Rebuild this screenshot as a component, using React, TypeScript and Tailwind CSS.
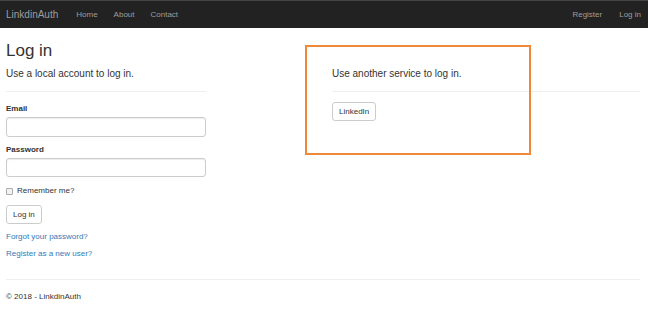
import React from 'react';

const NavLink: React.FC<{ label: string }> = ({ label }) => (
  <a className="text-[8px] text-[#9d9d9d] leading-none">{label}</a>
);

const inputClass =
  'block w-[200px] border border-[#ccc] rounded-[3px] shadow-[inset_0_1px_1px_rgba(0,0,0,0.075)] bg-white';

const buttonClass =
  'block h-[19px] px-[6px] text-[8px] text-[#333] border border-[#ccc] rounded-[3px] bg-white leading-none';

const App: React.FC = () => {
  return (
    <div className="relative w-[648px] h-[312px] bg-white text-[#333] font-['Liberation_Sans',Arial,sans-serif] overflow-hidden">
      <nav className="h-[28px] bg-[#222] border-t border-[#444] flex items-center pl-[6px] pr-[7px]">
        <span className="text-[10px] text-[#9d9d9d] leading-none mr-[18px]">LinkdinAuth</span>
        <div className="flex gap-[16px]">
          <NavLink label="Home" />
          <NavLink label="About" />
          <NavLink label="Contact" />
        </div>
        <div className="ml-auto flex gap-[17px]">
          <NavLink label="Register" />
          <NavLink label="Log in" />
        </div>
      </nav>

      <main className="pl-[6px] pr-[8px]">
        <h2 className="text-[17px] leading-none mt-[14px] mb-[10px]">Log in</h2>
        <div className="flex">
          <section className="w-[200px]">
            <h4 className="text-[10px] leading-none">Use a local account to log in.</h4>
            <hr className="border-[#eee] mt-[12px] mb-[13px]" />
            <label className="block text-[8px] font-bold leading-none mb-[4px]">Email</label>
            <input className={`${inputClass} h-[20px]`} />
            <label className="block text-[8px] font-bold leading-none mt-[9px] mb-[4px]">Password</label>
            <input type="password" className={`${inputClass} h-[19px]`} />
            <div className="flex items-center mt-[10px] text-[8px] leading-none">
              <span className="w-[7px] h-[7px] border border-[#aaa] bg-[#f2f2f2] rounded-[1px] mr-[4px]" />
              <span>Remember me?</span>
            </div>
            <button className={`${buttonClass} mt-[10px]`}>Log in</button>
            <div className="mt-[9px] text-[8px] text-[#337ab7] leading-none">
              <p>Forgot your password?</p>
              <p className="mt-[9px]">Register as a new user?</p>
            </div>
          </section>
          <section className="ml-[126px] flex-1">
            <h4 className="text-[10px] leading-none">Use another service to log in.</h4>
            <hr className="border-[#eee] mt-[12px] mb-[10px]" />
            <button className={buttonClass}>LinkedIn</button>
          </section>
        </div>
        <hr className="border-[#eee] mt-[21px] mb-[13px]" />
        <footer className="text-[8px] leading-none">© 2018 - LinkdinAuth</footer>
      </main>

      <div className="absolute left-[305px] top-[45px] w-[226px] h-[110px] border-2 border-[#f0883a]" />
    </div>
  );
};

export default App;
